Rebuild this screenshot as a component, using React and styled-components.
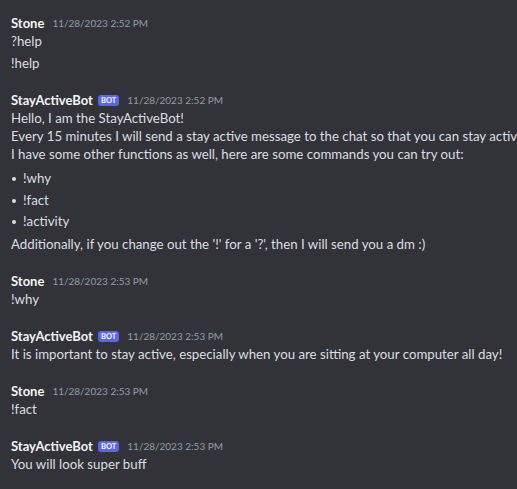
import React from 'react'
import styled, { createGlobalStyle } from 'styled-components'

const GlobalStyle = createGlobalStyle`
    body {
        margin: 0;
        background: #313338;
    }
`;

const Chat = styled.main`
    width: 517px;
    height: 489px;
    box-sizing: border-box;
    padding: 14px 0 0 11px;
    overflow: hidden;
    background: #313338;
    font-family: Lato, "Noto Sans", sans-serif;
`;

const Group = styled.section`
    & + & {
        margin-top: 19px;
    }
`;

const Header = styled.div`
    display: flex;
    align-items: center;
    height: 18px;
`;

const Username = styled.span`
    font-size: 13px;
    font-weight: 700;
    color: #f2f3f5;
`;

const BotTag = styled.span`
    display: inline-flex;
    align-items: center;
    height: 11px;
    margin-left: 5px;
    padding: 0 3px;
    border-radius: 3px;
    background: #5865f2;
    color: #fff;
    font-size: 7.5px;
    font-weight: 700;
`;

const Timestamp = styled.span`
    margin-left: ${({ $bot }) => ($bot ? '8px' : '8px')};
    font-size: 10px;
    color: #949ba4;
`;

const Message = styled.div`
    & + & {
        padding-top: 4px;
    }
`;

const Line = styled.div`
    font-size: 13.25px;
    line-height: 18px;
    color: #dbdee1;
    white-space: nowrap;
`;

const List = styled.ul`
    margin: 6px 0 5px;
    padding: 0;
    list-style: none;
`;

const Item = styled.li`
    position: relative;
    padding-left: 12px;
    font-size: 13.25px;
    line-height: 18px;
    color: #dbdee1;

    & + & {
        margin-top: 3.5px;
    }

    &::before {
        content: '';
        position: absolute;
        left: 1px;
        top: 8px;
        width: 4px;
        height: 4px;
        border-radius: 50%;
        background: #dbdee1;
    }
`;

const conversation = [
    { user: 'Stone', time: '11/28/2023 2:52 PM', messages: [['?help'], ['!help']] },
    {
        user: 'StayActiveBot',
        bot: true,
        time: '11/28/2023 2:52 PM',
        messages: [[
            'Hello, I am the StayActiveBot!',
            'Every 15 minutes I will send a stay active message to the chat so that you can stay active',
            'I have some other functions as well, here are some commands you can try out:',
            { list: ['!why', '!fact', '!activity'] },
            "Additionally, if you change out the '!' for a '?', then I will send you a dm :)",
        ]],
    },
    { user: 'Stone', time: '11/28/2023 2:53 PM', messages: [['!why']] },
    {
        user: 'StayActiveBot',
        bot: true,
        time: '11/28/2023 2:53 PM',
        messages: [['It is important to stay active, especially when you are sitting at your computer all day!']],
    },
    { user: 'Stone', time: '11/28/2023 2:53 PM', messages: [['!fact']] },
    { user: 'StayActiveBot', bot: true, time: '11/28/2023 2:53 PM', messages: [['You will look super buff']] },
];

const App = () => {
    return (
        <>
            <GlobalStyle />
            <Chat>
                {conversation.map(({ user, bot, time, messages }, i) => (
                    <Group key={i}>
                        <Header>
                            <Username>{user}</Username>
                            {bot && <BotTag>BOT</BotTag>}
                            <Timestamp $bot={bot}>{time}</Timestamp>
                        </Header>
                        {messages.map((lines, j) => (
                            <Message key={j}>
                                {lines.map((line, k) =>
                                    typeof line === 'string' ? (
                                        <Line key={k}>{line}</Line>
                                    ) : (
                                        <List key={k}>
                                            {line.list.map((cmd) => (
                                                <Item key={cmd}>{cmd}</Item>
                                            ))}
                                        </List>
                                    )
                                )}
                            </Message>
                        ))}
                    </Group>
                ))}
            </Chat>
        </>
    )
}

export default App
